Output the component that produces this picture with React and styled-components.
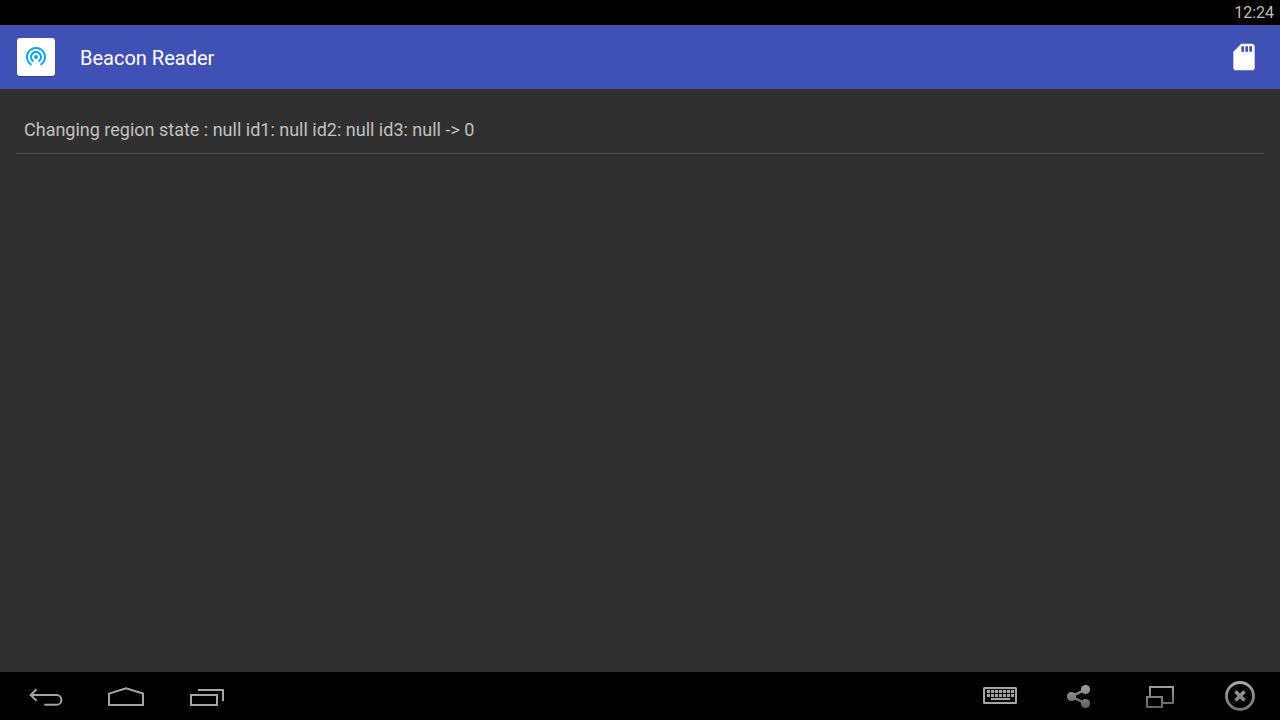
import React from "react";
import styled, { createGlobalStyle } from "styled-components";

const GlobalStyle = createGlobalStyle`
  * { box-sizing: border-box; }
  body { margin: 0; background: #303030; font-family: Roboto, sans-serif; }
`;

const Screen = styled.div`
  display: flex;
  flex-direction: column;
  min-height: 100vh;
  background: #303030;
`;

const StatusBar = styled.div`
  display: flex;
  justify-content: flex-end;
  align-items: center;
  height: 25px;
  padding: 0 6px;
  background: #000;
  color: #bebebe;
  font-size: 16px;
  line-height: 24px;
`;

const AppBar = styled.header`
  display: flex;
  align-items: center;
  height: 64px;
  padding: 0 16px;
  background: #3f51b5;
  color: #fff;
`;

const LauncherIcon = styled.span`
  display: flex;
  justify-content: center;
  width: 38px;
  height: 38px;
  margin: 0 25px 0 1px;
  padding-top: 6px;
  border-radius: 3px;
  background: #fff;
  box-shadow: 0 1px 1px rgba(0, 0, 0, 0.25);
`;

const Title = styled.h1`
  flex: 1;
  margin: 0;
  padding-top: 2px;
  font-size: 20px;
  font-weight: 400;
  line-height: 24px;
`;

const IconButton = styled.button`
  display: flex;
  align-items: center;
  justify-content: center;
  width: ${(p) => p.$width}px;
  height: 48px;
  padding: 0;
  border: 0;
  background: none;
  color: inherit;
`;

const Log = styled.ul`
  flex: 1;
  margin: 0;
  padding: 16px;
  list-style: none;
`;

const LogRow = styled.li`
  padding: 13px 8px 11px;
  border-bottom: 1px solid #525252;
  color: #c1c1c1;
  font-size: 18px;
  line-height: 24px;
`;

const NavBar = styled.nav`
  display: flex;
  justify-content: space-between;
  height: 48px;
  padding-left: 10px;
  background: #000;
  color: #a3a5a5;
`;

const NavGroup = styled.div`
  display: flex;
`;

const messages = ["Changing region state : null id1: null id2: null id3: null -> 0"];

function NavButton({ label, children }) {
  return (
    <IconButton $width={80} aria-label={label}>
      <svg width="60" height="40" viewBox="0 0 60 40" fill="none" stroke="currentColor" strokeWidth="2">
        {children}
      </svg>
    </IconButton>
  );
}

const keyColumns = [17, 21, 25, 29, 33, 37, 41];

export default function App() {
  return (
    <Screen>
      <GlobalStyle />
      <StatusBar>
        <time>12:24</time>
      </StatusBar>
      <AppBar>
        <LauncherIcon>
          <svg width="24" height="24" viewBox="0 0 24 24" fill="#03a9f4">
            <path d="M12 11c-1.1 0-2 .9-2 2s.9 2 2 2 2-.9 2-2-.9-2-2-2zm6 2c0-3.31-2.69-6-6-6s-6 2.69-6 6c0 2.22 1.21 4.15 3 5.19l1-1.74c-1.19-.7-2-1.97-2-3.45 0-2.21 1.79-4 4-4s4 1.79 4 4c0 1.48-.81 2.75-2 3.45l1 1.74c1.79-1.04 3-2.97 3-5.19zM12 3C6.48 3 2 7.48 2 13c0 3.7 2.01 6.92 4.99 8.65l1-1.73C5.61 18.53 4 15.96 4 13c0-4.42 3.58-8 8-8s8 3.58 8 8c0 2.96-1.61 5.53-4 6.92l1 1.73c2.99-1.73 5-4.95 5-8.65 0-5.52-4.48-10-10-10z" />
          </svg>
        </LauncherIcon>
        <Title>Beacon Reader</Title>
        <IconButton $width={40} aria-label="Save to SD card">
          <svg width="32" height="32" viewBox="0 0 24 24" fill="currentColor">
            <path d="M18 2h-8L4 8v12c0 1.100.9 2 2 2h12c1.100 0 2-.9 2-2V4c0-1.100-.9-2-2-2zm-6 6h-2V4h2v4zm3 0h-2V4h2v4zm3 0h-2V4h2v4z" />
          </svg>
        </IconButton>
      </AppBar>
      <Log>
        {messages.map((m) => (
          <LogRow key={m}>{m}</LogRow>
        ))}
      </Log>
      <NavBar>
        <NavGroup>
          <NavButton label="Back">
            <path d="M16.500 13.200 10.700 19l5.800 5.800M11 19h25.500a4.900 4.900 0 0 1 0 9.800H24.300" />
          </NavButton>
          <NavButton label="Home">
            <path d="M9 17.600 26 12.200 43 17.600V29H9z" />
          </NavButton>
          <NavButton label="Recent apps">
            <path d="M11 19h26v10H11zM18 14h25v11" />
          </NavButton>
        </NavGroup>
        <NavGroup>
          <NavButton label="Keyboard">
            <rect x="14" y="12" width="32" height="15" rx="0.500" />
            <g fill="currentColor" stroke="none">
              {keyColumns.map((x) => (
                <path key={x} d={`M${x} 14h3v3h-3zM${x} 18h3v3h-3z`} />
              ))}
              <path d="M21 22h19v2H21z" />
            </g>
          </NavButton>
          <NavButton label="Share">
            <defs>
              <linearGradient id="shareFade" gradientUnits="userSpaceOnUse" x1="0" y1="9" x2="0" y2="32">
                <stop offset="0" stopColor="#a0a0a0" />
                <stop offset="1" stopColor="#606060" />
              </linearGradient>
            </defs>
            <path d="M35.500 13.500 21.500 20.500l14 7" stroke="url(#shareFade)" strokeWidth="2.500" />
            <g fill="url(#shareFade)" stroke="none">
              <circle cx="35.500" cy="13.500" r="4.600" />
              <circle cx="21.500" cy="20.500" r="4.600" />
              <circle cx="35.500" cy="27.500" r="4.600" />
            </g>
          </NavButton>
          <NavButton label="Resize window">
            <defs>
              <linearGradient id="windowFade" gradientUnits="userSpaceOnUse" x1="0" y1="10" x2="0" y2="32">
                <stop offset="0" stopColor="#a0a0a0" />
                <stop offset="1" stopColor="#606060" />
              </linearGradient>
            </defs>
            <path d="M20 20V11h23v16H33M17 21h15v10H17z" stroke="url(#windowFade)" />
          </NavButton>
          <NavButton label="Close">
            <defs>
              <linearGradient id="closeFade" gradientUnits="userSpaceOnUse" x1="0" y1="5" x2="0" y2="35">
                <stop offset="0" stopColor="#a8a8a8" />
                <stop offset="1" stopColor="#707070" />
              </linearGradient>
            </defs>
            <circle cx="30" cy="20" r="13.500" stroke="url(#closeFade)" strokeWidth="2.800" />
            <path d="m25.500 15.500 9 9m0-9-9 9" stroke="url(#closeFade)" strokeWidth="3.600" />
          </NavButton>
        </NavGroup>
      </NavBar>
    </Screen>
  );
}
